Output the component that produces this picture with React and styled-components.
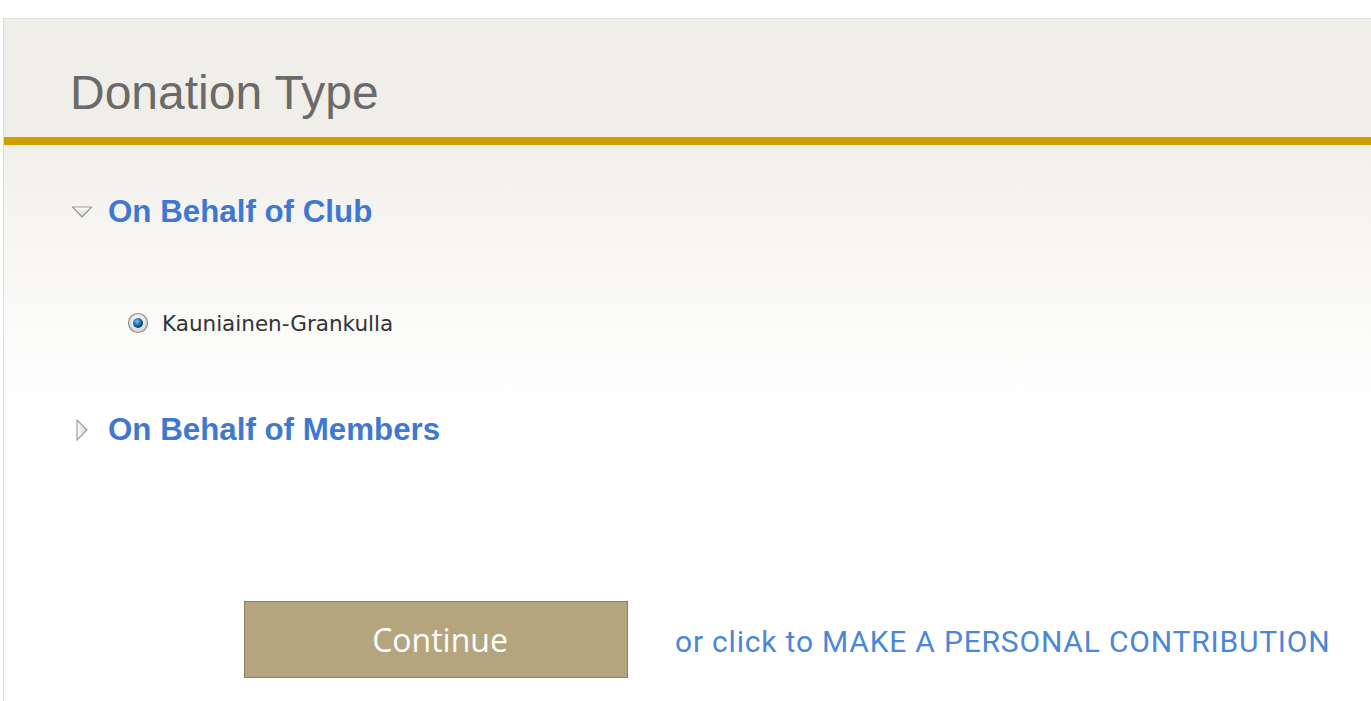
import React, { useState } from "react";
import styled, { createGlobalStyle } from "styled-components";

const Global = createGlobalStyle`
  html, body {
    margin: 0;
    padding: 0;
    background: #ffffff;
    overflow: hidden;
  }
  body {
    font-family: "Liberation Sans", Arial, sans-serif;
  }
`;

const Page = styled.div`
  width: 1371px;
  height: 701px;
  padding-top: 18px;
  padding-left: 3px;
  box-sizing: border-box;
`;

const Panel = styled.div`
  width: 1400px;
  height: 700px;
  border-top: 1px solid #dcdcdc;
  border-left: 1px solid #dcdcdc;
  display: flex;
  flex-direction: column;
`;

const Header = styled.div`
  height: 126px;
  flex-shrink: 0;
  background: #f0eee9;
  border-bottom: 8px solid #d09e00;
  display: flex;
  align-items: flex-start;
  padding-left: 66px;
  padding-top: 46px;
  box-sizing: border-box;
`;

const Title = styled.h1`
  margin: 0;
  font-family: "Liberation Sans", Arial, sans-serif;
  font-weight: normal;
  font-size: 48px;
  line-height: normal;
  color: #6a6a6a;
`;

const Body = styled.div`
  flex: 1;
  background: linear-gradient(to bottom, #f2f0eb 0px, #ffffff 260px);
  padding-left: 67px;
  display: flex;
  flex-direction: column;
`;

const Section = styled.div`
  display: flex;
  align-items: center;
  height: 40px;
  margin-top: ${({ $top }) => $top}px;
  cursor: pointer;
`;

const Arrow = styled.span`
  width: 37px;
  display: flex;
  align-items: center;
  padding-left: ${({ $open }) => ($open ? 0 : 4)}px;
  box-sizing: border-box;
`;

const SectionTitle = styled.span`
  font-family: "Liberation Sans", Arial, sans-serif;
  font-weight: bold;
  font-size: 31.3px;
  color: #3f78d2;
`;

const Option = styled.label`
  display: flex;
  align-items: center;
  gap: 13px;
  margin-left: 56px;
  margin-top: ${({ $top }) => $top}px;
  height: 30px;
  font-family: "DejaVu Sans", Verdana, sans-serif;
  font-size: 21.5px;
  color: #333333;
`;

const Footer = styled.div`
  display: flex;
  align-items: center;
  margin-top: 151px;
  margin-left: 173px;
  gap: 47px;
`;

const Button = styled.button`
  width: 384px;
  height: 77px;
  padding: 0 0 0 8px;
  background: #b5a57e;
  border: 1px solid #8d8060;
  color: #ffffff;
  font-family: "Open Sans", "DejaVu Sans", sans-serif;
  font-size: 32px;
  cursor: pointer;
`;

const Link = styled.a`
  font-family: "Roboto", "Liberation Sans", sans-serif;
  font-size: 30px;
  letter-spacing: 0.8px;
  color: #4a86da;
  text-decoration: none;
  cursor: pointer;
  margin-top: 4px;
`;

const DownArrow = () => (
  <svg width="22" height="14" viewBox="0 0 22 14">
    <defs>
      <linearGradient id="dg" x1="0" y1="0" x2="0" y2="1">
        <stop offset="0" stopColor="#ffffff" />
        <stop offset="1" stopColor="#d0d0d0" />
      </linearGradient>
    </defs>
    <path d="M1.5 2 L20.5 2 L11 12 Z" fill="url(#dg)" stroke="#9a9a9a" strokeWidth="1.2" strokeLinejoin="round" />
  </svg>
);

const RightArrow = () => (
  <svg width="14" height="24" viewBox="0 0 14 24">
    <defs>
      <linearGradient id="rg" x1="0" y1="0" x2="1" y2="0">
        <stop offset="0" stopColor="#ffffff" />
        <stop offset="1" stopColor="#d0d0d0" />
      </linearGradient>
    </defs>
    <path d="M2 2 L12 12 L2 22 Z" fill="url(#rg)" stroke="#a0a0a0" strokeWidth="1.2" strokeLinejoin="round" />
  </svg>
);

const Radio = () => (
  <svg width="22" height="22" viewBox="0 0 22 22">
    <defs>
      <radialGradient id="ring" cx="0.5" cy="0.35" r="0.6">
        <stop offset="0" stopColor="#ffffff" />
        <stop offset="1" stopColor="#d6d6d6" />
      </radialGradient>
      <radialGradient id="dot" cx="0.4" cy="0.35" r="0.6">
        <stop offset="0" stopColor="#7ec3f0" />
        <stop offset="0.6" stopColor="#1f6fb0" />
        <stop offset="1" stopColor="#0b3f6e" />
      </radialGradient>
    </defs>
    <circle cx="11" cy="11" r="9.5" fill="url(#ring)" stroke="#8f8f8f" strokeWidth="1.2" />
    <circle cx="11" cy="11" r="5" fill="url(#dot)" />
  </svg>
);

export default function App() {
  const [open, setOpen] = useState(true);

  return (
    <Page>
      <Global />
      <Panel>
        <Header>
          <Title>Donation Type</Title>
        </Header>
        <Body>
          <Section $top={47} onClick={() => setOpen(!open)}>
            <Arrow $open>
              <DownArrow />
            </Arrow>
            <SectionTitle>On Behalf of Club</SectionTitle>
          </Section>
          {open && (
            <Option $top={76}>
              <Radio />
              Kauniainen-Grankulla
            </Option>
          )}
          <Section $top={72}>
            <Arrow>
              <RightArrow />
            </Arrow>
            <SectionTitle>On Behalf of Members</SectionTitle>
          </Section>
          <Footer>
            <Button>Continue</Button>
            <Link>or click to MAKE A PERSONAL CONTRIBUTION</Link>
          </Footer>
        </Body>
      </Panel>
    </Page>
  );
}
